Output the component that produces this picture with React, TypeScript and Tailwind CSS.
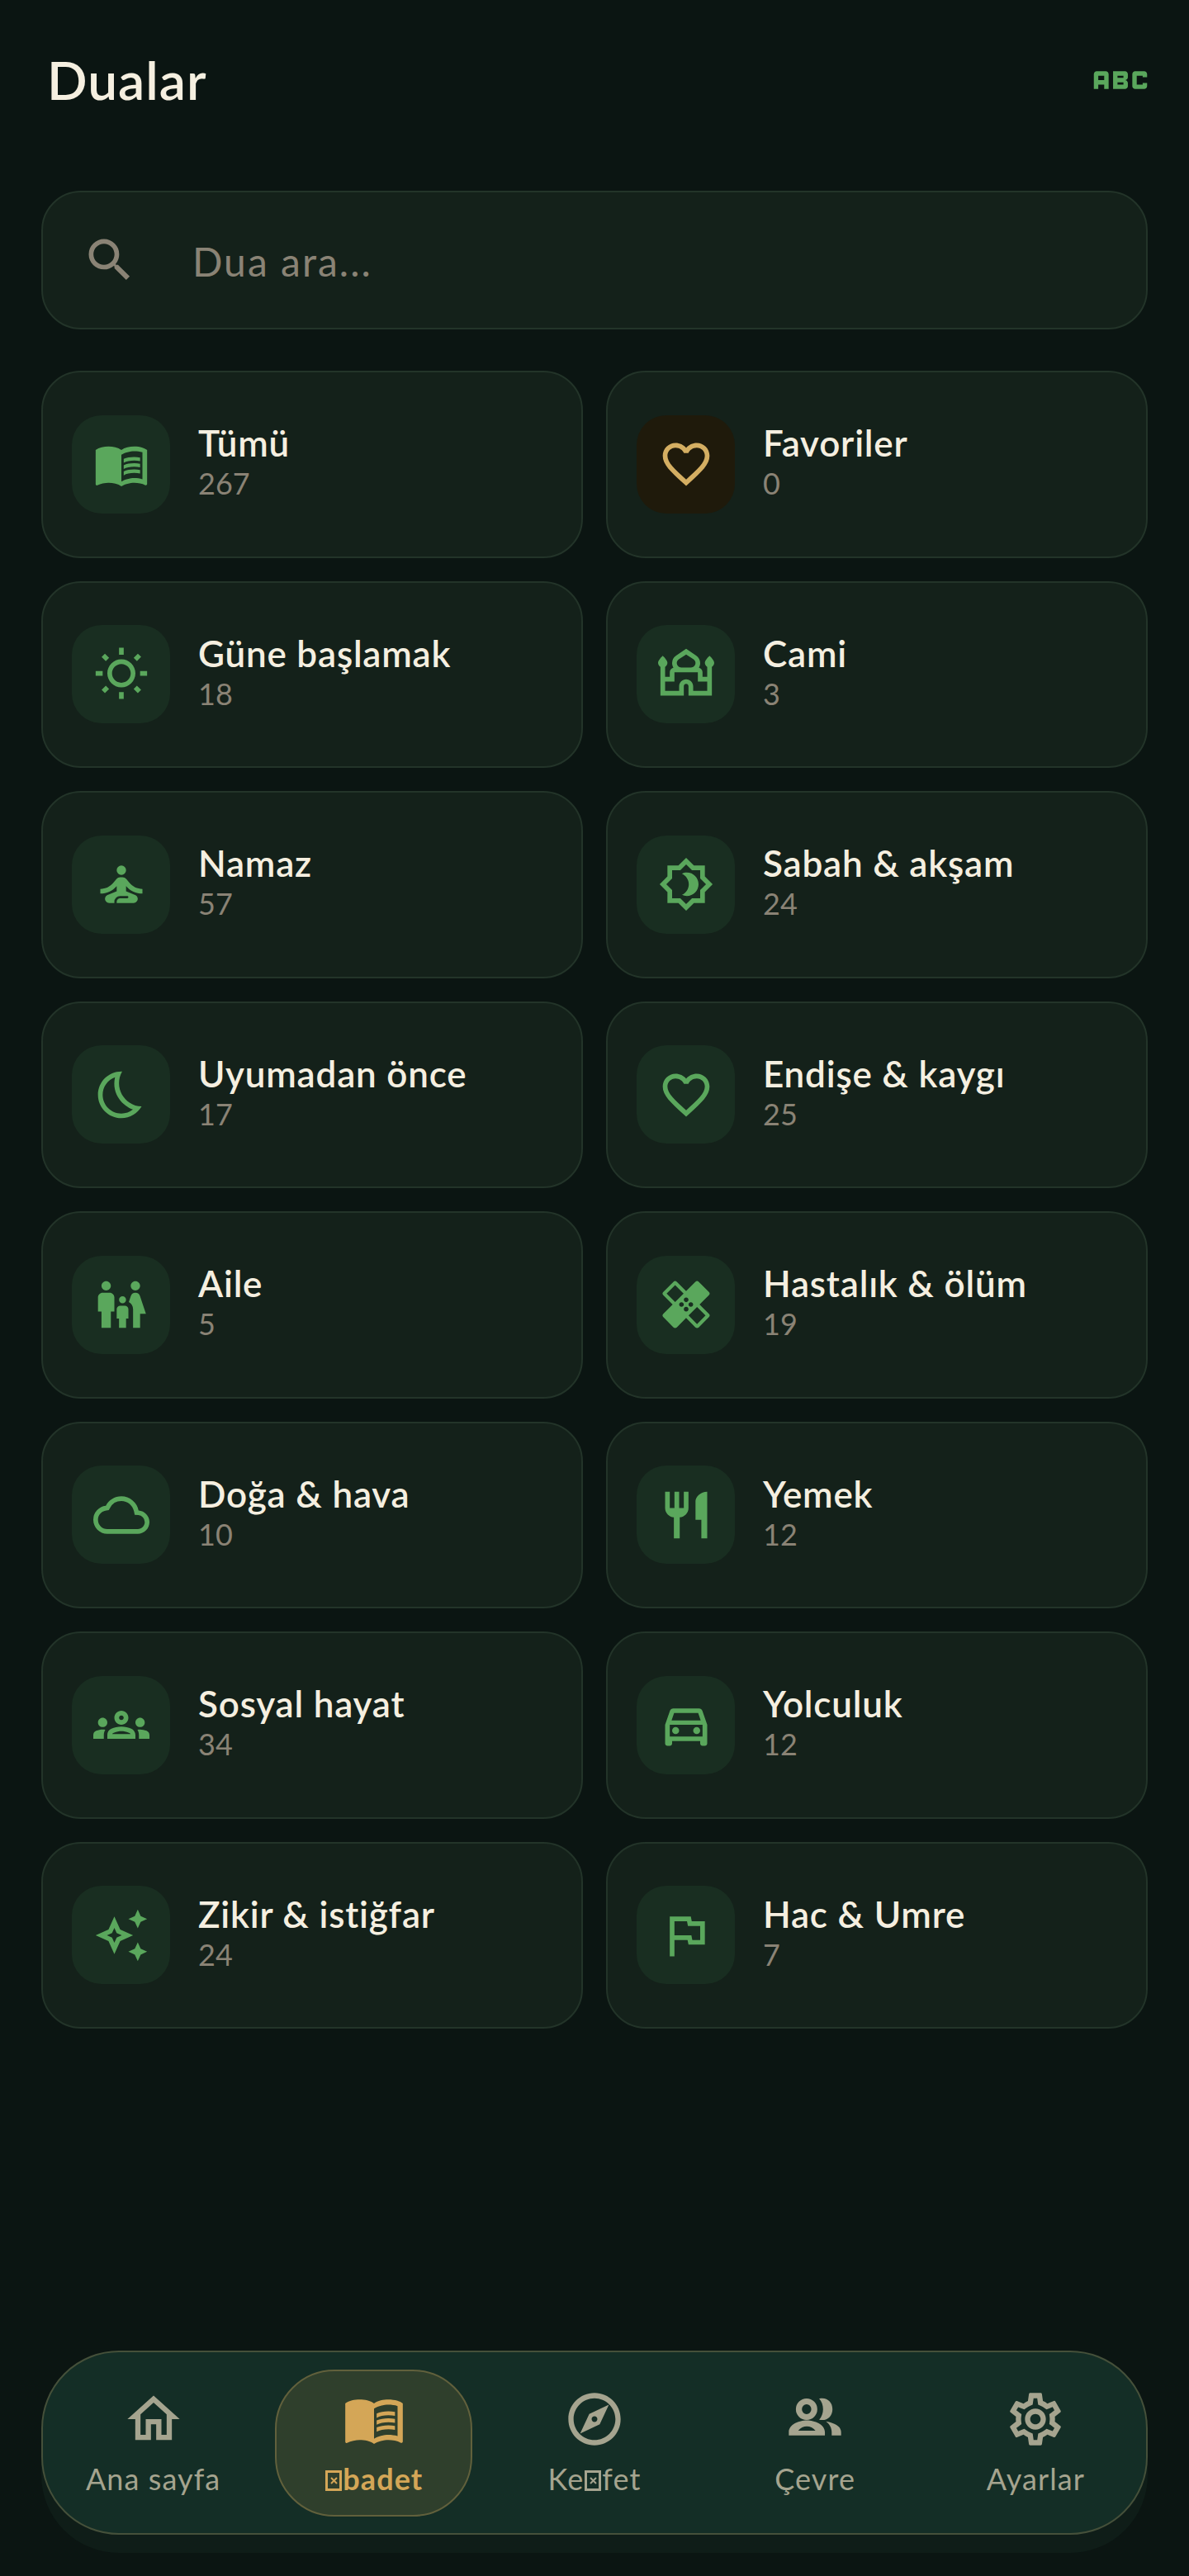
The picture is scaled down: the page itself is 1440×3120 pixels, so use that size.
import type { IconType } from 'react-icons'
import {
  MdAbc,
  MdFamilyRestroom,
  MdFavoriteBorder,
  MdMenuBook,
  MdOutlineAutoAwesome,
  MdOutlineBedtime,
  MdOutlineBrightness4,
  MdOutlineCloud,
  MdOutlineDirectionsCar,
  MdOutlineExplore,
  MdOutlineFlag,
  MdOutlineGroups,
  MdOutlineHealing,
  MdOutlineHome,
  MdOutlineMosque,
  MdOutlineSettings,
  MdOutlineWbSunny,
  MdRestaurant,
  MdSearch,
  MdSelfImprovement,
} from 'react-icons/md'

const CATEGORIES: { title: string; count: number; icon: IconType; gold?: boolean }[] = [
  { title: 'Tümü', count: 267, icon: MdMenuBook },
  { title: 'Favoriler', count: 0, icon: MdFavoriteBorder, gold: true },
  { title: 'Güne başlamak', count: 18, icon: MdOutlineWbSunny },
  { title: 'Cami', count: 3, icon: MdOutlineMosque },
  { title: 'Namaz', count: 57, icon: MdSelfImprovement },
  { title: 'Sabah & akşam', count: 24, icon: MdOutlineBrightness4 },
  { title: 'Uyumadan önce', count: 17, icon: MdOutlineBedtime },
  { title: 'Endişe & kaygı', count: 25, icon: MdFavoriteBorder },
  { title: 'Aile', count: 5, icon: MdFamilyRestroom },
  { title: 'Hastalık & ölüm', count: 19, icon: MdOutlineHealing },
  { title: 'Doğa & hava', count: 10, icon: MdOutlineCloud },
  { title: 'Yemek', count: 12, icon: MdRestaurant },
  { title: 'Sosyal hayat', count: 34, icon: MdOutlineGroups },
  { title: 'Yolculuk', count: 12, icon: MdOutlineDirectionsCar },
  { title: 'Zikir & istiğfar', count: 24, icon: MdOutlineAutoAwesome },
  { title: 'Hac & Umre', count: 7, icon: MdOutlineFlag },
]

// heavier than the package's people icons, redrawn from the reference
const PeopleIcon: IconType = ({ size }) => (
  <svg width={size} height={size} viewBox="0 0 24 24" fill="currentColor" fillRule="evenodd">
    <path d="M8.8 4.1a4 4 0 1 1 0 8.2a4 4 0 1 1 0-8.2zM8.8 6.3a1.8 1.9 0 1 0 0 3.8a1.8 1.9 0 1 0 0-3.8z" />
    <path d="M13.6 4.2c2.9-.7 5.1 1.2 5.1 4s-2.2 4.700-5.100 4c1-1.100 1.500-2.500 1.500-4s-.5-2.900-1.500-4z" />
    <path d="M2 18.200v-1.200c0-3 4-4.500 6.900-4.500s6.900 1.500 6.900 4.500v1.200zM5.600 16.400h6.600c-.8-1-2.100-1.600-3.300-1.600s-2.500.6-3.300 1.600z" />
    <path d="M16.200 12.900c2.800.5 5.800 1.600 5.800 4.100v1.200h-3.600V17c0-1.700-.9-3.100-2.200-4.100z" />
  </svg>
)

// the reference font has no glyph for some Turkish letters, so they show as a box
function MissingGlyph() {
  return (
    <span className="mx-[1px] inline-block h-[25px] w-[20px] border-[3px] border-current align-[-1px]">
      <svg width="9" height="9" viewBox="0 0 9 9" stroke="currentColor" strokeWidth="2" className="mx-auto mt-[5px]">
        <path d="M1 1l7 7M8 1L1 8" />
      </svg>
    </span>
  )
}

function CategoryCard({ title, count, icon: Icon, gold }: (typeof CATEGORIES)[number]) {
  return (
    <button
      type="button"
      className="flex items-center gap-[34px] rounded-[48px] border-2 border-[#233429] bg-[#14211a] pl-[35px] text-left"
    >
      <span
        className={`flex h-[119px] w-[119px] shrink-0 items-center justify-center rounded-[36px] ${
          gold ? 'bg-[#1f1a0b] text-[#d4ae62]' : 'bg-[#192e21] text-[#5aa75c]'
        }`}
      >
        <Icon size={68} />
      </span>
      <span className="flex flex-col pb-[4px]">
        <span className="text-[44px] leading-[50px] font-semibold tracking-[0.8px] text-[#f5efe0]">{title}</span>
        <span className="text-[36px] leading-[48px] text-[#8a8375]">{count}</span>
      </span>
    </button>
  )
}

function NavItem({ icon: Icon, active, children }: { icon: IconType; active?: boolean; children: React.ReactNode }) {
  return (
    <div className="flex flex-1 items-center justify-center">
      <div
        className={`flex h-[178px] w-[239px] flex-col items-center justify-center rounded-[72px] border-2 pt-[2px] ${
          active ? 'border-[#61603c] bg-[#2f3f2c] text-[#d4a657]' : 'border-transparent text-[#a5a48f]'
        }`}
      >
        <Icon size={76} />
        <span className={`mt-[10px] text-[36px] leading-[49px] tracking-[1.1px] ${active ? 'font-bold' : ''}`}>
          {children}
        </span>
      </div>
    </div>
  )
}

export default function App() {
  return (
    <div className="flex min-h-[3120px] flex-col bg-[#0b1512] font-['Lato','Liberation_Sans',sans-serif]">
      <header className="flex items-center justify-between pt-[62px] pr-[40px] pb-[99px] pl-[57px]">
        <h1 className="text-[64px] leading-[70px] font-semibold tracking-[1px] text-[#f5efe0]">Dualar</h1>
        <MdAbc size={86} className="my-[-8px] text-[#5aa75c]" />
      </header>

      <main className="px-[50px]">
        <label className="mb-[50px] flex h-[168px] items-center gap-[66px] rounded-[48px] border-2 border-[#233429] bg-[#14211a] pl-[47px]">
          <MdSearch size={68} className="shrink-0 text-[#8a8375]" />
          <input
            placeholder="Dua ara..."
            className="w-full bg-transparent pt-[3px] text-[48px] tracking-[2px] text-[#f5efe0] outline-none placeholder:text-[#8a8375]"
          />
        </label>

        <div className="grid grid-cols-2 auto-rows-[226.5px] gap-[28px]">
          {CATEGORIES.map((category) => (
            <CategoryCard key={category.title} {...category} />
          ))}
        </div>
      </main>

      <nav className="mx-[50px] mt-auto mb-[50px] flex h-[223px] items-center rounded-[94px] border-2 border-[#45503a] bg-[#142e26] shadow-[0_22px_0_#0f1d18]">
        <NavItem icon={MdOutlineHome}>Ana sayfa</NavItem>
        <NavItem icon={MdMenuBook} active>
          <MissingGlyph />
          badet
        </NavItem>
        <NavItem icon={MdOutlineExplore}>
          Ke
          <MissingGlyph />
          fet
        </NavItem>
        <NavItem icon={PeopleIcon}>Çevre</NavItem>
        <NavItem icon={MdOutlineSettings}>Ayarlar</NavItem>
      </nav>
    </div>
  )
}
